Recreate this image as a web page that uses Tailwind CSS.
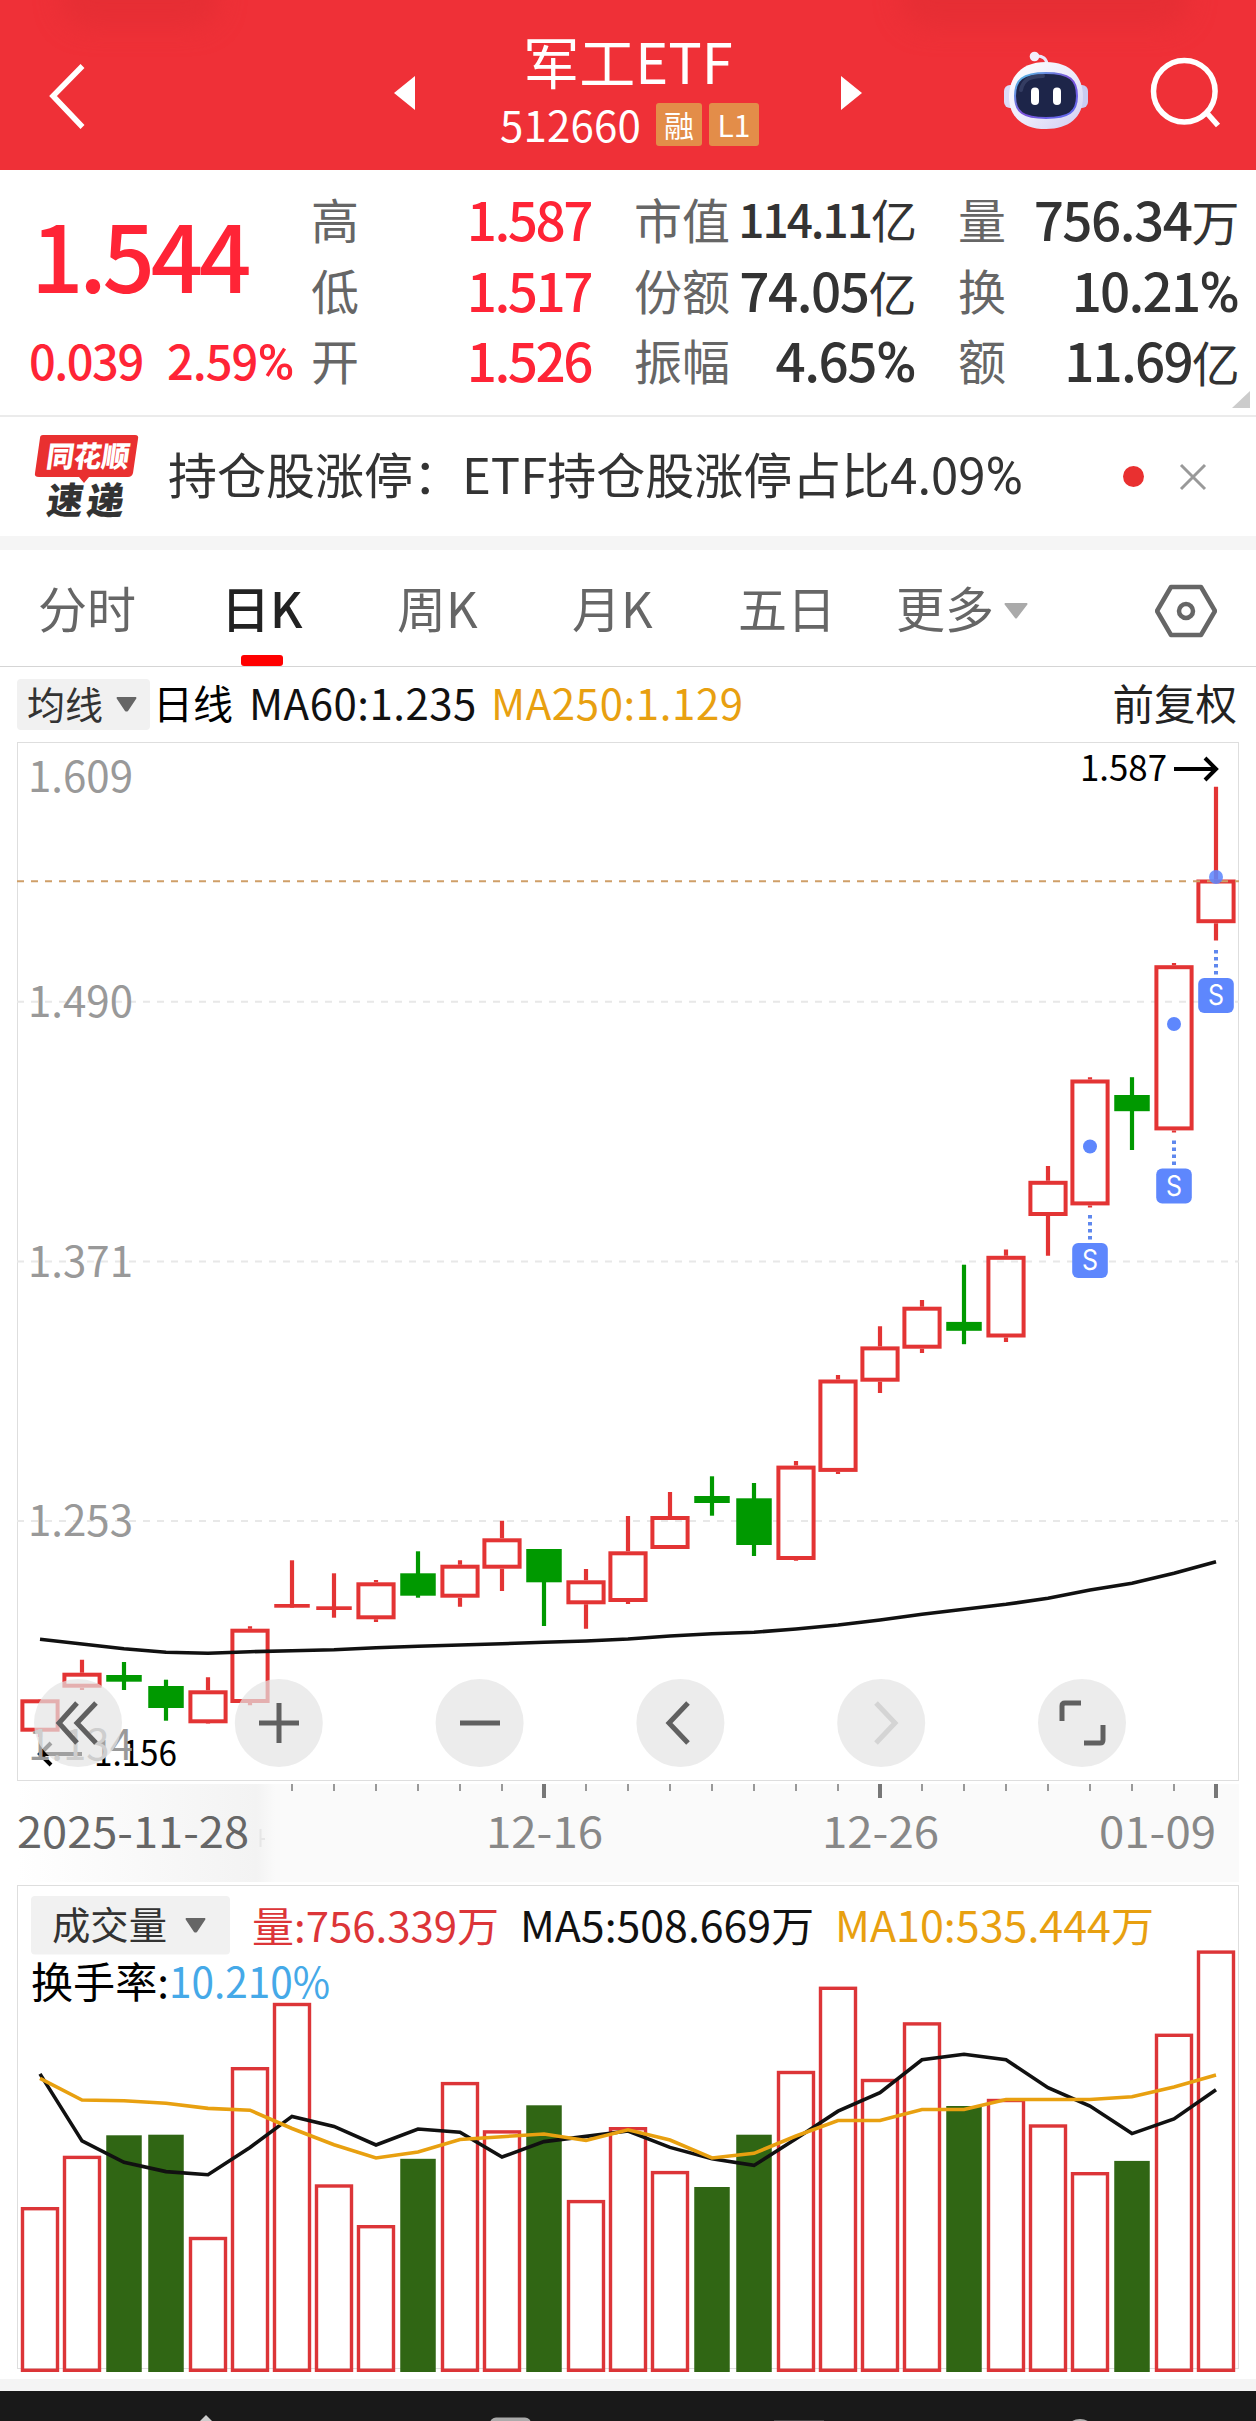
<!DOCTYPE html>
<html lang="zh-CN">
<head>
<meta charset="utf-8">
<title>军工ETF 512660</title>
<script src="https://cdn.jsdelivr.net/npm/@tailwindcss/browser@4"></script>
</head>
<body class="w-[1256px] h-[2421px] overflow-hidden bg-white font-['Noto_Sans_CJK_SC',sans-serif] text-[#333] whitespace-nowrap">

<!-- Title bar -->
<header class="relative flex h-[170px] overflow-hidden bg-[#ef3037] text-white">
  <div class="absolute left-[60px] -top-8 h-[60px] w-[160px] rounded-full bg-[#e62e34] blur-md"></div>
  <div class="absolute left-[900px] -top-8 h-[60px] w-[290px] rounded-full bg-[#e62e34] blur-md"></div>
  <div class="relative flex w-[394px] pl-[46px] pt-[62px]">
    <svg class="h-[70px] w-[42px]" viewBox="0 0 42 70" fill="none" stroke="currentColor" stroke-width="5.500"><path d="M36.500 4 7 34l29.500 31"/></svg>
  </div>
  <div class="relative flex w-[468px] justify-between">
    <svg class="mt-[76px] h-[34px] w-[21px]" viewBox="0 0 21 34" fill="currentColor"><path d="M21 0v34L0 17z"/></svg>
    <div class="flex flex-col items-center pt-[22px]">
      <div class="h-[78px] text-[56px] leading-[76px]">军工ETF</div>
      <div class="flex items-center pl-[3px]">
        <span class="text-[42px] leading-[48px] tracking-[0.2px]">512660</span>
        <span class="ml-[15px] flex h-[43px] w-[46px] items-center justify-center rounded-[3px] bg-[#e38d49] text-[30px] leading-none">融</span>
        <span class="ml-[7px] flex h-[43px] w-[50px] items-center justify-center rounded-[3px] bg-[#e38d49] text-[30px] leading-none">L1</span>
      </div>
    </div>
    <svg class="mt-[76px] h-[34px] w-[21px]" viewBox="0 0 21 34" fill="currentColor"><path d="M0 0v34l21-17z"/></svg>
  </div>
  <div class="relative flex grow pl-[141px] pt-[50px]">
    <svg class="h-[82px] w-[86px]" viewBox="0 0 86 82">
      <defs>
        <linearGradient id="shell" x1="0" y1="0" x2="1" y2="1"><stop offset="0" stop-color="#fff"/><stop offset=".55" stop-color="#ebeafb"/><stop offset="1" stop-color="#cfcdf2"/></linearGradient>
        <linearGradient id="rim" x1="0" y1="0" x2="1" y2="1"><stop offset="0" stop-color="#56c8e8"/><stop offset=".5" stop-color="#7b4fd8"/><stop offset="1" stop-color="#5b6ef0"/></linearGradient>
      </defs>
      <path d="M32 6q12-1 12 10" fill="none" stroke="#e9e6fa" stroke-width="3"/>
      <circle cx="31.500" cy="6.500" r="4.800" fill="#f3eefc"/>
      <rect x="1" y="35" width="14" height="23" rx="6" fill="#dcdcf8"/>
      <rect x="71" y="35" width="14" height="23" rx="6" fill="#c9cbf2"/>
      <path d="M43 12c25 0 37 15 37 35S66 79 43 79 6 67 6 47s12-35 37-35z" fill="url(#shell)"/>
      <path d="M43 23c24 0 31 7 31 23s-8 22-31 22-31-6-31-22 7-23 31-23z" fill="#1d2549" stroke="url(#rim)" stroke-width="2"/>
      <path d="M18 40c2-11 10-14 22-14" fill="none" stroke="#4b567c" stroke-width="4" stroke-linecap="round" opacity=".5"/>
      <rect x="28" y="37.500" width="8" height="17.500" rx="4" fill="#fff"/><rect x="50" y="37.500" width="8" height="17.500" rx="4" fill="#fff"/>
    </svg>
    <svg class="ml-[59px] h-[82px] w-[76px]" viewBox="0 0 76 82" fill="none" stroke="currentColor" stroke-width="5.500"><circle cx="36.300" cy="41.200" r="30.800"/><path d="M58 62l12 13.500"/></svg>
  </div>
</header>

<!-- Quote panel -->
<section class="relative flex h-[247px] border-b-2 border-[#ebebeb] font-medium">
  <div class="w-[311px] text-[#ff2436]">
    <div class="h-[138px] pl-[31px] pt-[33px] text-[92px] leading-[100px] tracking-[-4.200px]">1.544</div>
    <div class="flex pl-[29px] pt-[24px] text-[47px] leading-[56px]">
      <span class="w-[138px] tracking-[-1.500px]">0.039</span><span class="tracking-[-1px]">2.59<span class="font-['Roboto'] text-[50px]">%</span></span>
    </div>
  </div>
  <div class="grid w-[280px] auto-rows-[70.5px] grid-cols-[100px_1fr] pt-[13px] text-[53px] leading-[70px] text-[#ff2436]">
    <span class="text-[48px] font-normal text-[#666]">高</span><span class="justify-self-end tracking-[-2.500px]">1.587</span>
    <span class="text-[48px] font-normal text-[#666]">低</span><span class="justify-self-end tracking-[-2.500px]">1.517</span>
    <span class="text-[48px] font-normal text-[#666]">开</span><span class="justify-self-end tracking-[-2.500px]">1.526</span>
  </div>
  <div class="ml-[43px] grid w-[281px] auto-rows-[70.5px] grid-cols-[96px_1fr] pt-[13px] text-[53px] leading-[70px]">
    <span class="text-[48px] font-normal text-[#666]">市值</span><span class="justify-self-end text-[46px] tracking-[-2px]">114.11<span class="font-normal">亿</span></span>
    <span class="text-[48px] font-normal text-[#666]">份额</span><span class="justify-self-end tracking-[-1.500px]">74.05<span class="text-[48px] font-normal">亿</span></span>
    <span class="text-[48px] font-normal text-[#666]">振幅</span><span class="justify-self-end tracking-[-1.500px]">4.65<span class="font-['Roboto'] text-[55px]">%</span></span>
  </div>
  <div class="ml-[43px] grid w-[280px] auto-rows-[70.5px] grid-cols-[60px_1fr] pt-[13px] text-[53px] leading-[70px]">
    <span class="text-[48px] font-normal text-[#666]">量</span><span class="justify-self-end tracking-[-1.500px]">756.34<span class="text-[48px] font-normal">万</span></span>
    <span class="text-[48px] font-normal text-[#666]">换</span><span class="justify-self-end tracking-[-1.800px]">10.21<span class="font-['Roboto'] text-[55px]">%</span></span>
    <span class="text-[48px] font-normal text-[#666]">额</span><span class="justify-self-end tracking-[-1.800px]">11.69<span class="text-[48px] font-normal">亿</span></span>
  </div>
  <svg class="absolute bottom-[7px] right-[6px] h-[17px] w-[18px]" viewBox="0 0 18 17" fill="#ccc"><path d="M18 0v17H0z"/></svg>
</section>

<!-- News strip -->
<section class="flex h-[133px] items-center border-b-[14px] border-[#f5f5f5]">
  <svg class="ml-[34px] h-[88px] w-[106px]" viewBox="0 0 106 88">
    <path d="M9 2h92q4 0 3 4l-5 34q-1 4-5 4H55l-5 6-5-6H5q-5 0-4-4L6 5q0-3 3-3z" fill="#e93030"/>
    <g transform="skewX(-8)" font-weight="900">
      <text x="16" y="34.500" font-size="29" fill="#fff" textLength="83" lengthAdjust="spacingAndGlyphs">同花顺</text>
      <text x="23" y="81" font-size="37" fill="#333" textLength="36" lengthAdjust="spacingAndGlyphs">速</text>
      <text x="63" y="81" font-size="37" fill="#333" textLength="37" lengthAdjust="spacingAndGlyphs">递</text>
    </g>
  </svg>
  <div class="ml-[28px] w-[955px] pb-[3px] text-[49px] leading-[70px]">持仓股涨停：ETF持仓股涨停占比4.09<span class="font-['Roboto'] text-[51px]">%</span></div>
  <div class="size-[21px] rounded-full bg-[#e93030]"></div>
  <svg class="ml-[34px] size-[30px]" viewBox="0 0 30 30" stroke="#999" stroke-width="3"><path d="M3 3l24 24M27 3 3 27"/></svg>
</section>

<!-- Period tabs -->
<nav class="relative flex h-[117px] items-center border-b border-[#d5d5d5] text-[49px] leading-[70px] text-[#666]">
  <span class="-mt-[3px] ml-[38px] w-[183px]">分时</span>
  <span class="-mt-[3px] w-[176px] font-medium text-[#222]">日K</span>
  <span class="-mt-[3px] w-[175px]">周K</span>
  <span class="-mt-[3px] w-[166px]">月K</span>
  <span class="-mt-[3px] w-[158px]">五日</span>
  <span class="-mt-[3px] w-[108px]">更多</span>
  <svg class="mt-[6px] h-[16px] w-[24px]" viewBox="0 0 24 16" fill="#aaa"><path d="M1 0h22q1 1 0 2L13 15q-1 1-2 0L1 2Q0 1 1 0z"/></svg>
  <svg class="mt-[6px] ml-[127px] h-[56px] w-[62px]" viewBox="0 0 62 56" fill="none" stroke="#666" stroke-width="4.500" stroke-linejoin="round"><path d="M16 4h30l14 24-14 24H16L2 28z"/><circle cx="31" cy="28" r="7"/></svg>
  <div class="absolute bottom-0 left-[241px] h-[11px] w-[42px] rounded-[3px] bg-[#f00]"></div>
</nav>

<!-- Moving-average legend -->
<div class="flex h-[75px] items-center pl-[17px] pr-[19px] text-[42px] leading-[60px] text-black">
  <button class="flex h-[51px] w-[133px] items-center rounded-[4px] bg-[#f1f1f1] pl-[10px] text-[38px] leading-[50px] text-[#333]"><span class="-mt-[4px]">均线</span>
    <svg class="ml-[13px] h-[15px] w-[21px]" viewBox="0 0 21 15" fill="#666"><path d="M1 0h19q1 1 0 2l-8 12q-1.500 1-3 0L1 2Q0 1 1 0z"/></svg>
  </button>
  <span class="-mt-[6px] ml-[3px] w-[96px] text-[40px]">日线</span>
  <span class="-mt-[6px] w-[242px] tracking-[0.5px] text-[#111]">MA60:1.235</span>
  <span class="-mt-[6px] tracking-[0.6px] text-[#e8a010]">MA250:1.129</span>
  <span class="-mt-[6px] ml-auto text-[41.500px] text-[#222]">前复权</span>
</div>

<!-- Price chart, date axis and volume chart -->
<svg id="chart" class="block h-[1637px] w-[1256px]" viewBox="0 742 1256 1637" fill="none"></svg>

<!-- Bottom bar -->
<footer class="h-[42px] border-t-[12px] border-[#f4f4f4] bg-[#191919]">
  <svg class="block h-[30px] w-[1256px]" viewBox="0 0 1256 30">
    <path d="M206 24l8 8h-16z" fill="#ccc"/>
    <rect x="490" y="26.500" width="41" height="20" rx="6" fill="#aaa"/>
    <rect x="774" y="29" width="50" height="8" fill="#444"/>
    <circle cx="1080" cy="44" r="16" fill="#aaa"/>
  </svg>
</footer>

<script>
const RED = '#e33434', GREEN = '#009900', VOL_GREEN = '#306614', BLUE = '#5e87fd', AMBER = '#e8a010';
const X = i => 40 + 42 * i;
// [rising, wick top, wick bottom, body top, body bottom, volume top]
const days = [
  [1,1699,1737,1699.3,1731.7,2207],[1,1659.7,1690,1672.7,1687.7,2155.7],[0,1662,1690,1675,1681.7,2135.3],
  [0,1679.7,1720.7,1686,1708,2134.7],[1,1677.3,1723.7,1690.3,1723.3,2236.8],[1,1626.3,1705.3,1628.7,1703,2067],
  [1,1560.3,1607.7,1604,1607.7,2002.8],[1,1573.3,1617.7,1606.3,1610,2184.3],[1,1580,1622,1582.3,1619.3,2225],
  [0,1551.3,1597.7,1573.3,1595.7,2158.8],[1,1560.3,1606.7,1564.7,1597.7,2081.9],[1,1520.7,1591,1538.3,1568.7,2130.2],
  [0,1549,1626,1549,1582.3,2105.3],[1,1569,1628.7,1580.3,1604.3,2199.9],[1,1516,1604,1551.3,1602,2127],
  [1,1492,1549,1516,1549,2170.9],[0,1476.3,1515.7,1496,1503,2187],[0,1483,1556,1498.3,1545,2134.7],
  [1,1461,1560.7,1465.6,1560,2070.8],[1,1375,1474,1379.5,1471.9,1986.6],[1,1326.3,1392.9,1346.4,1381.7,2078.8],
  [1,1300,1353,1306.7,1348.7,2022.2],[0,1264.7,1344.2,1321.9,1330.8,2106],[1,1249.6,1342,1255.8,1337.5,2098.8],
  [1,1166,1255.8,1180.8,1216,2124.3],[1,1077.2,1207.6,1079.5,1205.4,2172],[0,1077.2,1150,1095,1111.2,2160.9],
  [1,963,1132.6,965.2,1130.4,2033.6],[1,786.7,940.6,879.5,923.2,1950.4]];
const ma60 = [1639.3,1644,1648.7,1652.3,1653.3,1651.7,1650.7,1649.7,1647.7,1646.3,1645,1643.7,1642.3,1641,1639,1636,1633.7,1632.3,1629,1625,1620,1614.3,1609.3,1604.3,1598.3,1590,1583.3,1573.3,1561.7];
const vma5 = [2073.9,2140.9,2162.3,2171.6,2174.7,2147.4,2116.4,2126.4,2145,2129,2132.2,2157,2141.6,2136.4,2131,2147.4,2158.8,2165.4,2138.8,2111.2,2092.6,2059.8,2054.3,2059.8,2087.7,2106,2133.6,2119,2089.8];
const vma10 = [2078.4,2100,2100.8,2103.3,2108.4,2110.2,2128.5,2144.7,2158,2152,2139.5,2136.7,2134,2140.5,2129.8,2140,2158,2153.3,2136,2120.5,2120.5,2109.5,2109.5,2099.5,2099.5,2099.5,2096.7,2087,2075];

const out = [];
const rect = (x, y, w, h, attrs) => out.push(`<rect x="${x}" y="${y}" width="${w}" height="${h}" ${attrs}/>`);
const path = (d, attrs) => out.push(`<path d="${d}" ${attrs}/>`);
const text = (x, y, size, color, len, s, extra = '') =>
  out.push(`<text x="${x}" y="${y}" font-size="${size}" fill="${color}" textLength="${len}" lengthAdjust="spacingAndGlyphs" ${extra}>${s}</text>`);
const line = (pts, color) => path('M' + pts.map((y, i) => `${X(i)} ${y}`).join('L'), `stroke="${color}" stroke-width="3.6"`);

// frames and grid
rect(17.5, 742.5, 1221, 1038, 'stroke="#dedede"');
for (const y of [1001.8, 1261.5, 1521]) path(`M17 ${y}H1239`, 'stroke="#e8e8e8" stroke-width="2" stroke-dasharray="7 7"');
rect(17.5, 1885.5, 1221, 483, 'stroke="#dedede"');

// candles
days.forEach(([up, wt, wb, bt, bb], i) => {
  const x = X(i), c = up ? RED : GREEN;
  if (up && bb - bt > 6) {
    path(`M${x} ${wt}V${bt}M${x} ${bb}V${wb}`, `stroke="${c}" stroke-width="4.2"`);
    rect(x - 17.6, bt + 2, 35.2, bb - bt - 4, `stroke="${c}" stroke-width="4"`);
  } else {
    path(`M${x} ${wt}V${wb}`, `stroke="${c}" stroke-width="4.2"`);
    rect(x - 17.75, bt, 35.5, bb - bt, `fill="${c}"`);
  }
});
path('M17 881.3H1239', 'stroke="#cf9f68" stroke-width="2" stroke-dasharray="7 7"');
line(ma60, '#111');

// sell marks
for (const [i, dot, from, box] of [[25, 1146.5, 1215, 1260.5], [27, 1024, 1140.5, 1186], [28, 877, 950, 995.5]]) {
  const x = X(i);
  out.push(`<circle cx="${x}" cy="${dot}" r="7" fill="${BLUE}" fill-opacity="${i === 28 ? 0.88 : 1}"/>`);
  path(`M${x} ${from}v25`, `stroke="#5f88ee" stroke-width="4" stroke-dasharray="3.5 3.5"`);
  rect(x - 17.8, box - 17.5, 35.6, 35, `rx="6" fill="${BLUE}"`);
  out.push(`<text x="${x}" y="${box + 9.8}" font-size="28" font-weight="400" font-family="Inter" text-anchor="middle" fill="#fff" textLength="16" lengthAdjust="spacingAndGlyphs">S</text>`);
}

// high and low labels
text(1080, 780.7, 35, '#000', 87, '1.587');
path('M1174 769H1216M1205 758l11 11-11 11', 'stroke="#000" stroke-width="4"');
text(94, 1765.7, 35, '#000', 83, '1.156');
path('M82 1754H40M51 1743l-11 11 11 11', 'stroke="#000" stroke-width="4"');

// price scale
[['1.609', 792], ['1.490', 1017], ['1.371', 1277], ['1.253', 1535.7], ['1.134', 1760.3]].forEach(([s, y]) => text(28, y, 42, '#999', 105, s));

// floating controls
const icons = [
  'M77 1703l-18 20 18 20M96 1703l-19 20 19 20', 'M259 1723h40M279 1703v40', 'M460 1723h40',
  'M688 1703l-19 20 19 20', 'M876 1703l19 20-19 20', 'M1081 1703h-16q-3 0-3 3v15M1084 1743h16q3 0 3-3v-15'];
icons.forEach((d, i) => {
  out.push(`<circle cx="${78 + 200.8 * i}" cy="1723" r="44" fill="#e4e4e4" fill-opacity=".7"/>`);
  path(d, `stroke="${i === 4 ? '#d4d4d4' : '#606060'}" stroke-width="5"`);
});

// date axis
out.push('<defs><linearGradient id="fade"><stop offset="0" stop-color="#fff"/><stop offset=".93" stop-color="#f3f3f3"/><stop offset="1" stop-color="#fafafa"/></linearGradient></defs>');
rect(17, 1784, 1222, 98, 'fill="#fafafa"');
rect(17, 1784, 258, 98, 'fill="url(#fade)"');
path('M260.500 1829v18M260 1839h5', 'stroke="#e6e6e6" stroke-width="2"');
for (let i = 6; i < 29; i++) {
  const major = i % 8 === 4;
  path(`M${X(i)} 1784v${major ? 14 : 7}`, `stroke="${major ? '#777' : '#999'}" stroke-width="${major ? 4 : 2}"`);
}
text(17, 1847.7, 42, '#666', 232, '2025−11−28'.replace(/−/g, '-'));
text(486, 1847.7, 42, '#888', 117, '12-16');
text(822, 1847.7, 42, '#888', 117, '12-26');
text(1099, 1847.7, 42, '#888', 117, '01-09');

// volume bars and averages
days.forEach(([up, , , , , top], i) => up
  ? rect(X(i) - 17.5, top + 1.7, 35, 2370.3 - top - 1.7, 'stroke="#dc3538" stroke-width="3.4"')
  : rect(X(i) - 17.75, top, 35.5, 2372 - top, `fill="${VOL_GREEN}"`));
line(vma5, '#111');
line(vma10, AMBER);

// volume legend
rect(31, 1896, 199, 58.5, 'rx="4" fill="#f1f1f1"');
text(52, 1938.5, 38, '#333', 115, '成交量');
path('M186 1918h19q1 1 0 2l-8 12q-1.500 1-3 0l-8-12q-1-1 0-2z', 'fill="#666"');
text(252, 1942, 41, '#dc3538', 247, '量:756.339万');
text(520, 1942, 42, '#111', 294, 'MA5:508.669万');
text(835, 1942, 42, AMBER, 319, 'MA10:535.444万');
text(31, 1998, 42, '#000', 138, '换手率:');
text(169, 1998, 42, '#45a9e8', 161, '10.210%');

document.getElementById('chart').innerHTML = out.join('');
</script>
</body>
</html>
